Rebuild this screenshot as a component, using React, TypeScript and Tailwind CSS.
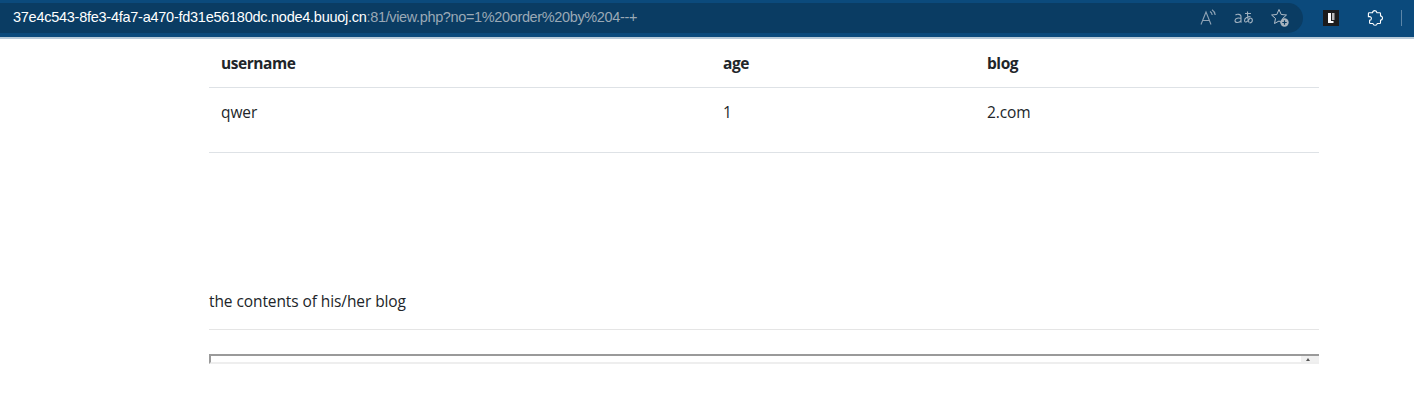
import React from "react";

const columns = [
  { name: "username", value: "qwer", width: "w-[502px]" },
  { name: "age", value: "1", width: "w-[264px]" },
  { name: "blog", value: "2.com", width: "flex-1" },
];

function ReadAloudIcon() {
  return (
    <svg width="18" height="18" viewBox="0 0 18 18" fill="none" stroke="#8fa3b5" strokeWidth="1.100">
      <path d="M1 15.500 6 3l5 12.500M2.800 11.500h6.400" />
      <path d="M10 2.500c1.300.8 2 2 2.200 3.500M12 .8c1.900 1.200 3 3 3.200 5.200" />
    </svg>
  );
}

function TranslateIcon() {
  return (
    <svg width="20" height="16" viewBox="0 0 20 16" fill="none" stroke="#9fb0bf" strokeWidth="1.100">
      <path d="M1.500 5.200c1-1.200 5.500-1.500 5.500 1.500v6M7 8.500C5 7.500 1 8 1 10.500c0 2.700 4.500 2.700 6 0" />
      <path d="M11 3.500h6M13.500 1.500c0 4 .3 8 1.500 11M16.500 6.500c-2.500 0-6 1.500-6 4 0 2.800 3.500 1.500 5.500-2.500 3 0 3.500 4-.5 5" />
    </svg>
  );
}

function FavoriteIcon() {
  return (
    <svg width="20" height="20" viewBox="0 0 20 20" fill="none">
      <path d="M9 1.500 11.200 6.500l5.300.5-3.900 3.500 1 5L9 13 4.500 15.500l1-5L1.600 7l5.200-.5z" stroke="#b4c0cb" strokeWidth="1" />
      <circle cx="14.500" cy="14.500" r="4.200" fill="#a9b4be" />
      <path d="M14.500 12.300v4.400M12.300 14.500h4.400" stroke="#0a3c63" strokeWidth="1.200" />
    </svg>
  );
}

function LogoTile() {
  return (
    <svg width="16" height="16" viewBox="0 0 16 16">
      <rect width="16" height="16" fill="#1c1c1c" />
      <path d="M5 3h3v8h2.500v2H5z" fill="#ffffff" />
      <path d="M9 3h2.500v7H9z" fill="#b8b8b8" />
    </svg>
  );
}

function ExtensionIcon() {
  return (
    <svg width="16" height="16" viewBox="0 0 16 16" fill="none" stroke="#ffffff" strokeWidth="1.100">
      <path d="M5.500 2.800C5.700 1.300 6.700.6 7.800.6s2 .8 2.200 2.200h2.700c.5 0 .8.300.8.800v2.300c1.300.2 2 1.100 2 2.200s-.8 2-2 2.200v2.400c0 .5-.3.8-.8.800H10.300c-.2 1.100-1.100 1.800-2.200 1.800s-2-.7-2.200-1.800H3.400c-.5 0-.8-.3-.8-.8v-2.300c1 0 1.800-.8 1.800-1.900S3.600 6.600 2.600 6.600H1.400V3.600c0-.5.300-.8.800-.8z" />
    </svg>
  );
}

export default function App() {
  return (
    <div className="min-h-[415px] bg-white font-['Open_Sans','Liberation_Sans',sans-serif] text-[#212529]">
      {/* Browser toolbar */}
      <div className="flex h-[39px] items-start border-b-2 border-[#b9cbd9] bg-[#0b4a7c] pt-[3px]">
        <div className="flex h-[30px] w-[1303px] items-center justify-between rounded-r-[15px] bg-[#0a3c63] pl-[13px] pr-[13px]">
          <div className="whitespace-nowrap font-['Liberation_Sans',sans-serif] text-[14.500px] tracking-[-0.26px] text-white">
            37e4c543-8fe3-4fa7-a470-fd31e56180dc.node4.buuoj.cn
            <span className="tracking-[-0.36px] text-[#9aa9b6]">:81/view.php?no=1%20order%20by%204--+</span>
          </div>
          <div className="flex items-center gap-[16px]">
            <ReadAloudIcon />
            <TranslateIcon />
            <FavoriteIcon />
          </div>
        </div>
        <div className="ml-[20px] mt-[7px]">
          <LogoTile />
        </div>
        <div className="ml-[28px] mt-[7px]">
          <ExtensionIcon />
        </div>
        <div className="ml-[18px] mt-[7px] h-4 w-px bg-[#5c86a8]" />
      </div>

      {/* Page content */}
      <div className="ml-[209px] w-[1110px] text-[15.500px] leading-6 tracking-[-0.09px]">
        <div className="flex h-[49px] items-center border-b border-[#dee2e6] font-bold tracking-[-0.45px]">
          {columns.map((col) => (
            <div key={col.name} className={`${col.width} px-3`}>
              {col.name}
            </div>
          ))}
        </div>
        <div className="flex h-[65px] border-b border-[#dee2e6] pt-3">
          {columns.map((col) => (
            <div key={col.name} className={`${col.width} px-3`}>
              {col.value}
            </div>
          ))}
        </div>

        <p className="mt-[136px]">the contents of his/her blog</p>
        <div className="mt-[16px] h-px bg-[#e5e5e5]" />

        {/* Empty iframe, cut off at its top edge */}
        <div className="mt-6 flex h-[10px] border-l-2 border-t-2 border-b-2 border-l-[#9a9a9a] border-t-[#9a9a9a] border-b-[#eeeeee]">
          <div className="flex-1" />
          <div className="flex w-[18px] justify-start bg-[#f0f0f0] pl-[5px] pt-[2px]">
            <div className="h-0 w-0 border-x-[2.500px] border-b-[3px] border-x-transparent border-b-[#555555]" />
          </div>
        </div>
      </div>
    </div>
  );
}
